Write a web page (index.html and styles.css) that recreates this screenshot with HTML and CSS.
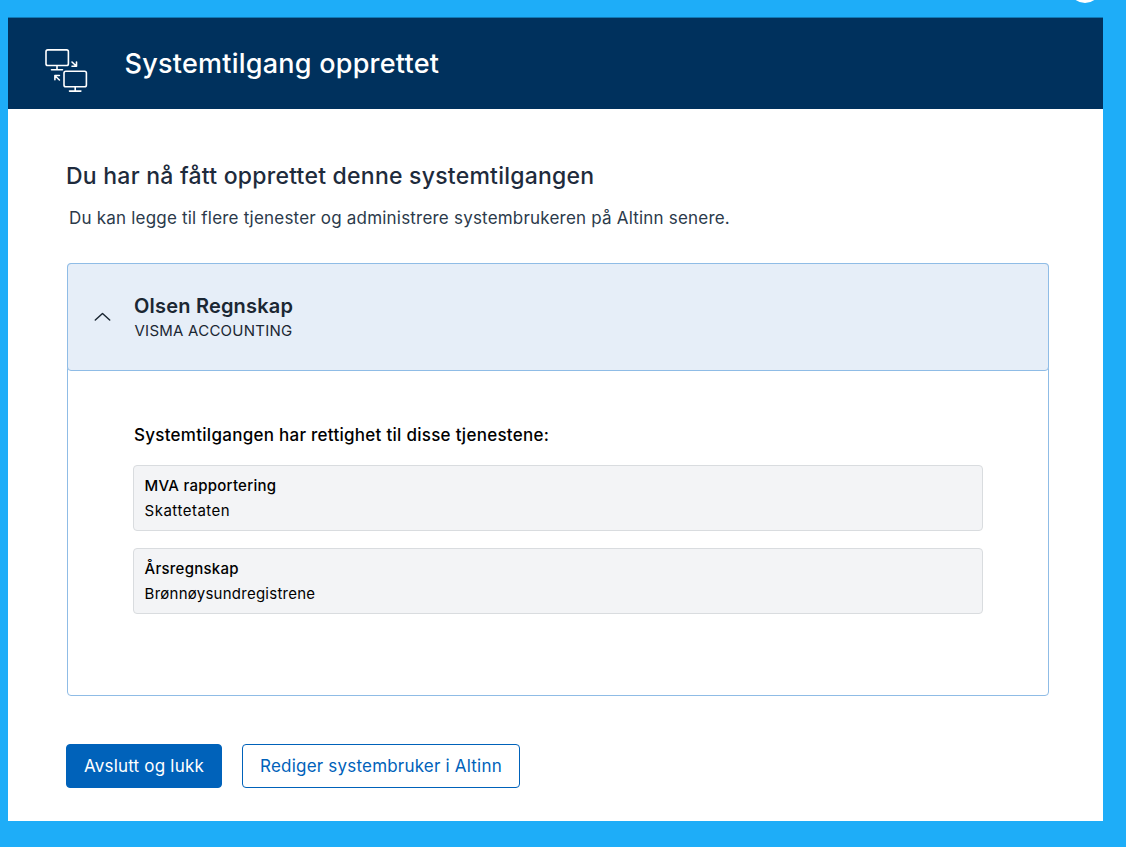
FILE: index.html
```html
<!DOCTYPE html>
<html lang="no">
<head>
<meta charset="utf-8">
<title>Systemtilgang opprettet</title>
<link rel="stylesheet" href="styles.css">
</head>
<body>
<span class="page-dot"></span>
<main class="card">
  <header class="card-header">
    <svg class="system-icon" width="44" height="46" viewBox="0 0 44 46" fill="none" stroke="#fff" stroke-width="1.6" stroke-linecap="round" stroke-linejoin="round">
      <rect x="2" y="2.9" width="22.400" height="15.6" rx="1.8"/>
      <path d="M13 18.7v4M7.500 22.8h11"/>
      <rect x="20" y="24.2" width="22.4" height="15.6" rx="1.8"/>
      <path d="M31.200 40v3.800M25.500 44.100h11.400"/>
      <path d="M28 15l4.200 4M32.500 15v4.300h-4.500M15.400 33l-4.200-4M10.900 32.800v-4.300h4.500"/>
    </svg>
    <h1 class="title">Systemtilgang opprettet</h1>
  </header>
  <div class="card-body">
    <h2 class="heading">Du har nå fått opprettet denne systemtilgangen</h2>
    <p class="intro">Du kan legge til flere tjenester og administrere systembrukeren på Altinn senere.</p>
    <section class="accordion">
      <div class="accordion-header">
        <svg class="chevron" width="18" height="10" viewBox="0 0 18 10" fill="none" stroke="#1b2733" stroke-width="1.5" stroke-linecap="round" stroke-linejoin="round"><path d="M1.300 8L8.500 1.500L15.700 8"/></svg>
        <div class="owner">
          <h3 class="owner-name">Olsen Regnskap</h3>
          <p class="owner-system">VISMA ACCOUNTING</p>
        </div>
      </div>
      <div class="accordion-content">
        <h4 class="services-title">Systemtilgangen har rettighet til disse tjenestene:</h4>
        <ul class="services">
          <li class="service"><span class="service-name">MVA rapportering</span><span class="service-owner service-owner-wide">Skattetaten</span></li>
          <li class="service"><span class="service-name">Årsregnskap</span><span class="service-owner">Brønnøysundregistrene</span></li>
        </ul>
      </div>
    </section>
    <div class="actions">
      <button class="button button-primary">Avslutt og lukk</button>
      <button class="button button-secondary">Rediger systembruker i Altinn</button>
    </div>
  </div>
</main>
</body>
</html>
```
FILE: styles.css
```css
* { box-sizing: border-box; margin: 0; padding: 0; }
body {
  height: 847px;
  padding: 17px 23px 26px 8px;
  background: #1eadf8;
  font-family: Inter, "Liberation Sans", sans-serif;
  overflow: hidden;
}
.page-dot {
  position: absolute;
  left: 1069px;
  top: -29px;
  width: 32px;
  height: 32px;
  border-radius: 50%;
  background: #fff;
}
.card { height: 804px; background: #fff; }
.card-header {
  display: flex;
  height: 92px;
  padding-left: 36px;
  border-top: 1px solid #1279b5;
  background: #00315d;
  color: #fff;
}
.system-icon { margin-top: 29px; }
.title {
  margin: 29px 0 0 36.5px;
  font-size: 27px;
  line-height: 34px;
  font-weight: 500;
  letter-spacing: 0.24px;
  white-space: nowrap;
}
.card-body { padding: 52px 54px 0 58px; }
.heading {
  font-size: 23px;
  line-height: 30px;
  font-weight: 500;
  letter-spacing: 0.24px;
  color: #1e2b3c;
}
.intro {
  margin: 15px 0 0 3px;
  font-size: 17px;
  line-height: 24px;
  letter-spacing: 0.2px;
  color: #2b3a4b;
}
.accordion {
  height: 433px;
  margin: 33px 0 0 1px;
  border: 1px solid #8fbce6;
  border-radius: 4px;
}
.accordion-header {
  display: flex;
  height: 108px;
  margin: -1px -1px 0;
  padding-left: 26px;
  border: 1px solid #8fbce6;
  border-radius: 4px;
  background: #e6eef8;
  color: #1b2733;
}
.chevron { margin-top: 48px; }
.owner { margin: 29px 0 0 22px; }
.owner-name { font-size: 20px; line-height: 26px; font-weight: 600; letter-spacing: 0.2px; }
.owner-system { padding-left: 0.5px; font-size: 15px; line-height: 24px; letter-spacing: 0.25px; }
.accordion-content { padding: 52px 65px 0; color: #000; }
.services-title { font-size: 17px; line-height: 24px; font-weight: 500; letter-spacing: 0.27px; padding-left: 1px; }
.services { display: grid; gap: 17px; margin-top: 18px; list-style: none; }
.service {
  display: flex;
  flex-direction: column;
  height: 66px;
  padding: 7px 10.6px;
  border: 1px solid #d9dcdf;
  border-radius: 4px;
  background: #f3f4f6;
  font-size: 15px;
  line-height: 25px;
  letter-spacing: 0.25px;
}
.service-name { font-weight: 500; }
.service-owner-wide { letter-spacing: 0.5px; }
.actions { display: flex; gap: 20px; margin-top: 48px; }
.button {
  height: 44px;
  border: 1px solid #0062ba;
  border-radius: 4px;
  font: 400 17px/24px Inter, "Liberation Sans", sans-serif;
  letter-spacing: 0.2px;
  white-space: nowrap;
}
.button-primary { width: 156px; background: #0062ba; color: #fff; }
.button-secondary { width: 278px; background: #fff; color: #0062ba; }
```
